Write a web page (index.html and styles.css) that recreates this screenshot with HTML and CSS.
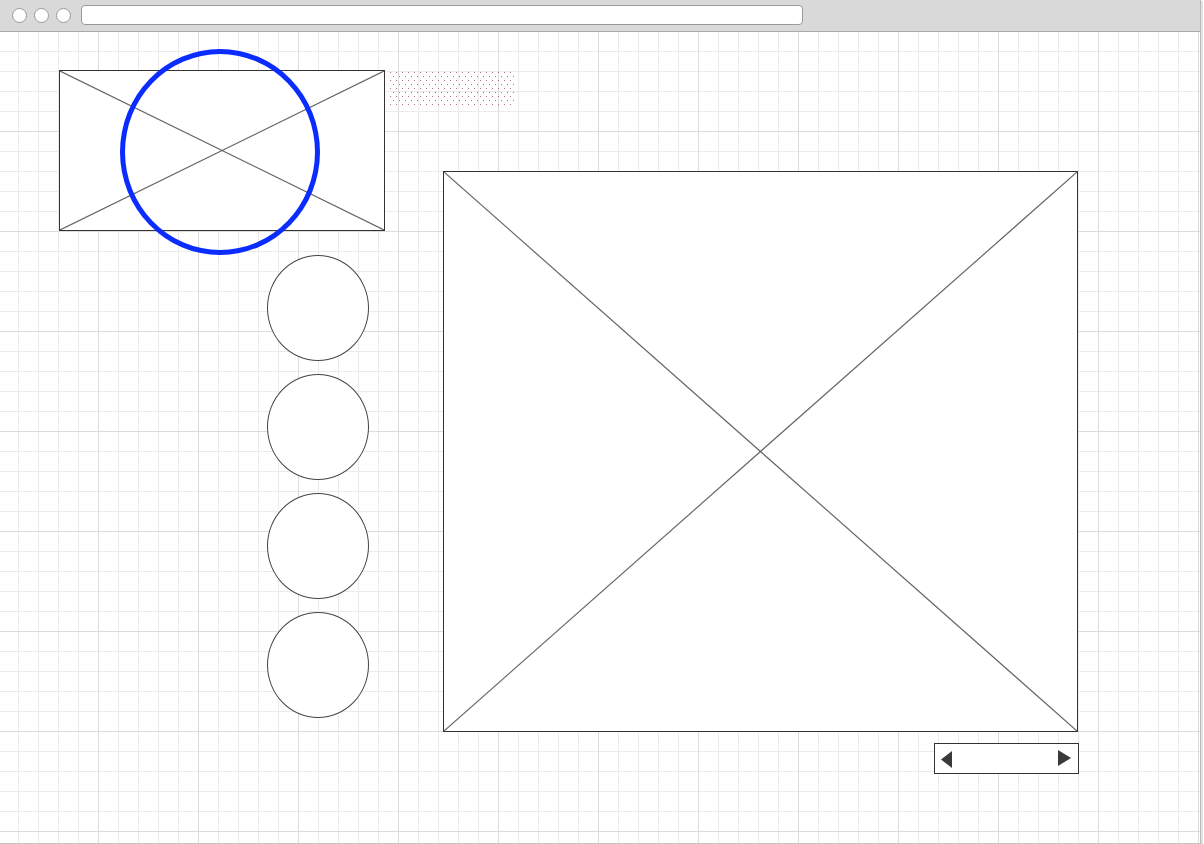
FILE: index.html
```html
<!DOCTYPE html>
<html>
<head>
<meta charset="utf-8">
<link rel="stylesheet" href="styles.css">
</head>
<body>
<div class="window">
  <div class="toolbar">
    <div class="dots">
      <span class="dot"></span><span class="dot"></span><span class="dot"></span>
    </div>
    <div class="address"></div>
  </div>
  <div class="canvas">
    <div class="ph ph-small">
      <svg viewBox="0 0 100 100" preserveAspectRatio="none"><line x1="0" y1="0" x2="100" y2="100"/><line x1="100" y1="0" x2="0" y2="100"/></svg>
    </div>
    <div class="stipple"></div>
    <div class="ring"></div>
    <div class="circles">
      <div class="circle"></div>
      <div class="circle"></div>
      <div class="circle"></div>
      <div class="circle"></div>
    </div>
    <div class="ph ph-big">
      <svg viewBox="0 0 100 100" preserveAspectRatio="none"><line x1="0" y1="0" x2="100" y2="100"/><line x1="100" y1="0" x2="0" y2="100"/></svg>
    </div>
    <div class="pager">
      <svg class="arr" width="12" height="17" viewBox="0 0 12 17"><polygon points="11,0 11,17 0,8.5"/></svg>
      <svg class="arr" width="13" height="16" viewBox="0 0 13 16"><polygon points="0,0 0,16 13,8"/></svg>
    </div>
  </div>
</div>
</body>
</html>
```
FILE: styles.css
```css
html, body {
  margin: 0;
  padding: 0;
  background: #ffffff;
  font-family: "Liberation Sans", Arial, sans-serif;
}
.window {
  width: 1200px;
  height: 843px;
  display: flex;
  flex-direction: column;
  border-right: 1px solid #b8b8b8;
  border-bottom: 1px solid #c4c4c4;
  box-shadow: 2px 1px 0 #e2e2e2;
  overflow: hidden;
}
.toolbar {
  flex: none;
  background: #d9d9d9;
  border-bottom: 1px solid #a9a9a9;
  display: flex;
  align-items: center;
  padding-left: 12px;
  box-sizing: border-box;
  height: 32px;
}
.dots {
  display: flex;
  gap: 7px;
  margin-top: -1px;
}
.dot {
  width: 13px;
  height: 13px;
  border: 1px solid #9a9a9a;
  border-radius: 50%;
  background: #fff;
}
.address {
  margin-left: 10px;
  width: 720px;
  height: 18px;
  border: 1px solid #9a9a9a;
  border-radius: 4px;
  background: #fff;
  margin-top: -1px;
}
.canvas {
  flex: 1;
  position: relative;
  background-color: #fff;
  background-image:
    linear-gradient(to right, #dcdcdc 1px, transparent 1px),
    linear-gradient(to bottom, #dcdcdc 1px, transparent 1px),
    linear-gradient(to right, #ebebeb 1px, transparent 1px),
    linear-gradient(to bottom, #ebebeb 1px, transparent 1px);
  background-size: 100px 100px, 100px 100px, 20px 20px, 20px 20px;
  background-position: -2px -1px;
}
.ph {
  position: absolute;
  background: #fff;
  border: 1px solid #333;
  box-sizing: border-box;
}
.ph svg {
  display: block;
  width: 100%;
  height: 100%;
}
.ph line {
  stroke: #666;
  stroke-width: 1.2;
  vector-effect: non-scaling-stroke;
}
.ph-small {
  left: 59px;
  top: 38px;
  width: 326px;
  height: 161px;
}
.ph-big {
  left: 443px;
  top: 139px;
  width: 635px;
  height: 561px;
}
.stipple {
  position: absolute;
  left: 389px;
  top: 39px;
  width: 126px;
  height: 37px;
  background-image:
    radial-gradient(circle at 1.5px 1.5px, rgba(150, 90, 90, 0.8) 0.6px, transparent 0.9px),
    radial-gradient(circle at 4.5px 5.5px, rgba(110, 100, 100, 0.8) 0.6px, transparent 0.9px);
  background-size: 6px 8px, 6px 8px;
  background-position: 0 0, 0 0;
}
.ring {
  position: absolute;
  left: 120px;
  top: 17px;
  width: 200px;
  height: 206px;
  box-sizing: border-box;
  border: 5px solid #0a2cff;
  border-radius: 50%;
}
.circles {
  position: absolute;
  left: 267px;
  top: 223px;
  display: flex;
  flex-direction: column;
  gap: 13px;
}
.circle {
  width: 102px;
  height: 106px;
  box-sizing: border-box;
  border: 1px solid #444;
  border-radius: 50%;
  background: #fff;
}
.pager {
  position: absolute;
  left: 934px;
  top: 711px;
  width: 145px;
  height: 31px;
  box-sizing: border-box;
  border: 1px solid #333;
  background: #fff;
  display: flex;
  justify-content: space-between;
  align-items: center;
  padding: 0 7px 0 6px;
}
.arr polygon {
  fill: #3a3a3a;
}
.arr:first-child {
  margin-top: 2px;
}
.arr:last-child {
  margin-top: -1px;
}
```
